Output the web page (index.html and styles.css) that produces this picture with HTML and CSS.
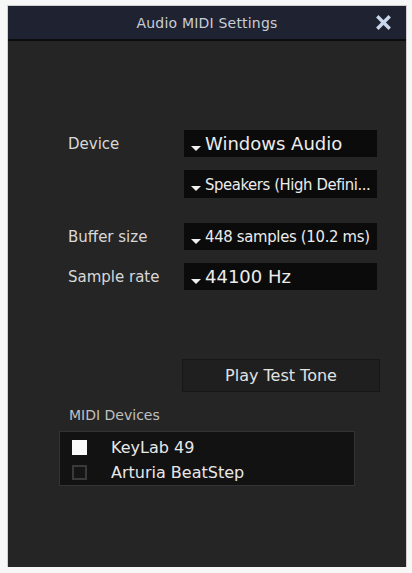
FILE: index.html
```html
<!DOCTYPE html>
<html>
<head>
<meta charset="utf-8">
<link rel="stylesheet" href="styles.css">
</head>
<body>
<div class="window">
  <div class="titlebar">
    <span class="title">Audio MIDI Settings</span>
    <svg class="close" width="15" height="15" viewBox="0 0 15 15"><path d="M2.5 2.5 L12.5 12.5 M12.5 2.5 L2.5 12.5" stroke="#c9d6ec" stroke-width="3.4" stroke-linecap="square"/></svg>
  </div>
  <div class="content">
    <div class="row r1">
      <div class="label">Device</div>
      <div class="select big"><span class="arrow"></span>Windows Audio</div>
    </div>
    <div class="row r2">
      <div class="label"></div>
      <div class="select cond"><span class="arrow"></span>Speakers (High Defini...</div>
    </div>
    <div class="row r3">
      <div class="label">Buffer size</div>
      <div class="select cond2"><span class="arrow"></span>448 samples (10.2 ms)</div>
    </div>
    <div class="row r4">
      <div class="label">Sample rate</div>
      <div class="select big"><span class="arrow"></span>44100 Hz</div>
    </div>
    <div class="btnrow"><div class="button">Play Test Tone</div></div>
    <div class="midi-label">MIDI Devices</div>
    <div class="list">
      <div class="item"><span class="check on"></span>KeyLab 49</div>
      <div class="item"><span class="check"></span>Arturia BeatStep</div>
    </div>
  </div>
</div>
</body>
</html>
```
FILE: styles.css
```css
html, body { margin: 0; padding: 0; background: #f7f7f7; }
body { padding: 6px 0 0 8px; font-family: "DejaVu Sans", Verdana, sans-serif; }
.window {
  width: 398px; height: 561px; background: #252525;
  display: flex; flex-direction: column;
  box-shadow: 0 0 0 1px #d0d0d0;
}
.titlebar {
  height: 33px; background: #1f2331; border-bottom: 2px solid #0c0c0e;
  position: relative; display: flex; align-items: center; justify-content: center;
}
.title { color: #c9cdd6; font-size: 14px; letter-spacing: 0.2px; }
.close { position: absolute; right: 15px; top: 9px; }
.content { padding: 89px 0 0 60px; display: flex; flex-direction: column; }
.row { display: flex; height: 27px; }
.r2 { margin-top: 13px; height: 28px; }
.r3 { margin-top: 25px; }
.r4 { margin-top: 13px; }
.label { width: 116px; flex: none; color: #d8d8d8; font-size: 15px; display: flex; align-items: center; }
.select {
  width: 193px; box-sizing: border-box;
  background: #0b0b0b; color: #ececec; display: flex; align-items: center;
  padding-left: 7px; white-space: nowrap; overflow: hidden;
}
.select.big { font-size: 18px; }
.select.cond { font-family: "DejaVu Sans Condensed", "DejaVu Sans", sans-serif; font-size: 16.5px; letter-spacing: -0.4px; }
.select.cond2 { font-family: "DejaVu Sans Condensed", "DejaVu Sans", sans-serif; font-size: 16.5px; letter-spacing: -0.3px; }
.arrow {
  flex: none; width: 0; height: 0; border-left: 5.5px solid transparent; border-right: 5.5px solid transparent;
  border-top: 5px solid #f0f0f0; margin: 9px 4px 0 0; align-self: center;
}
.btnrow { margin-top: 69px; padding-left: 114px; }
.button {
  width: 196px; height: 31px; background: #1f1f1f; border: 1px solid #171717;
  color: #e2e2e2; font-size: 16px; display: flex; align-items: center; justify-content: center;
}
.midi-label { color: #c0c0c0; font-size: 14px; margin: 15px 0 0 1px; height: 17px; line-height: 17px; }
.list {
  margin: 7px 0 0 -9px; width: 296px; height: 55px; background: #121212;
  border: 1px solid #333; padding-top: 3px; box-sizing: border-box;
}
.item { height: 25px; display: flex; align-items: center; color: #e8e8e8; font-size: 16px; }
.check { flex: none; width: 15px; height: 15px; margin: 0 24px 0 12px; border: 2px solid #3a3a3a; background: #151515; box-sizing: border-box; }
.check.on { background: #fafafa; border-color: #fafafa; }
```
